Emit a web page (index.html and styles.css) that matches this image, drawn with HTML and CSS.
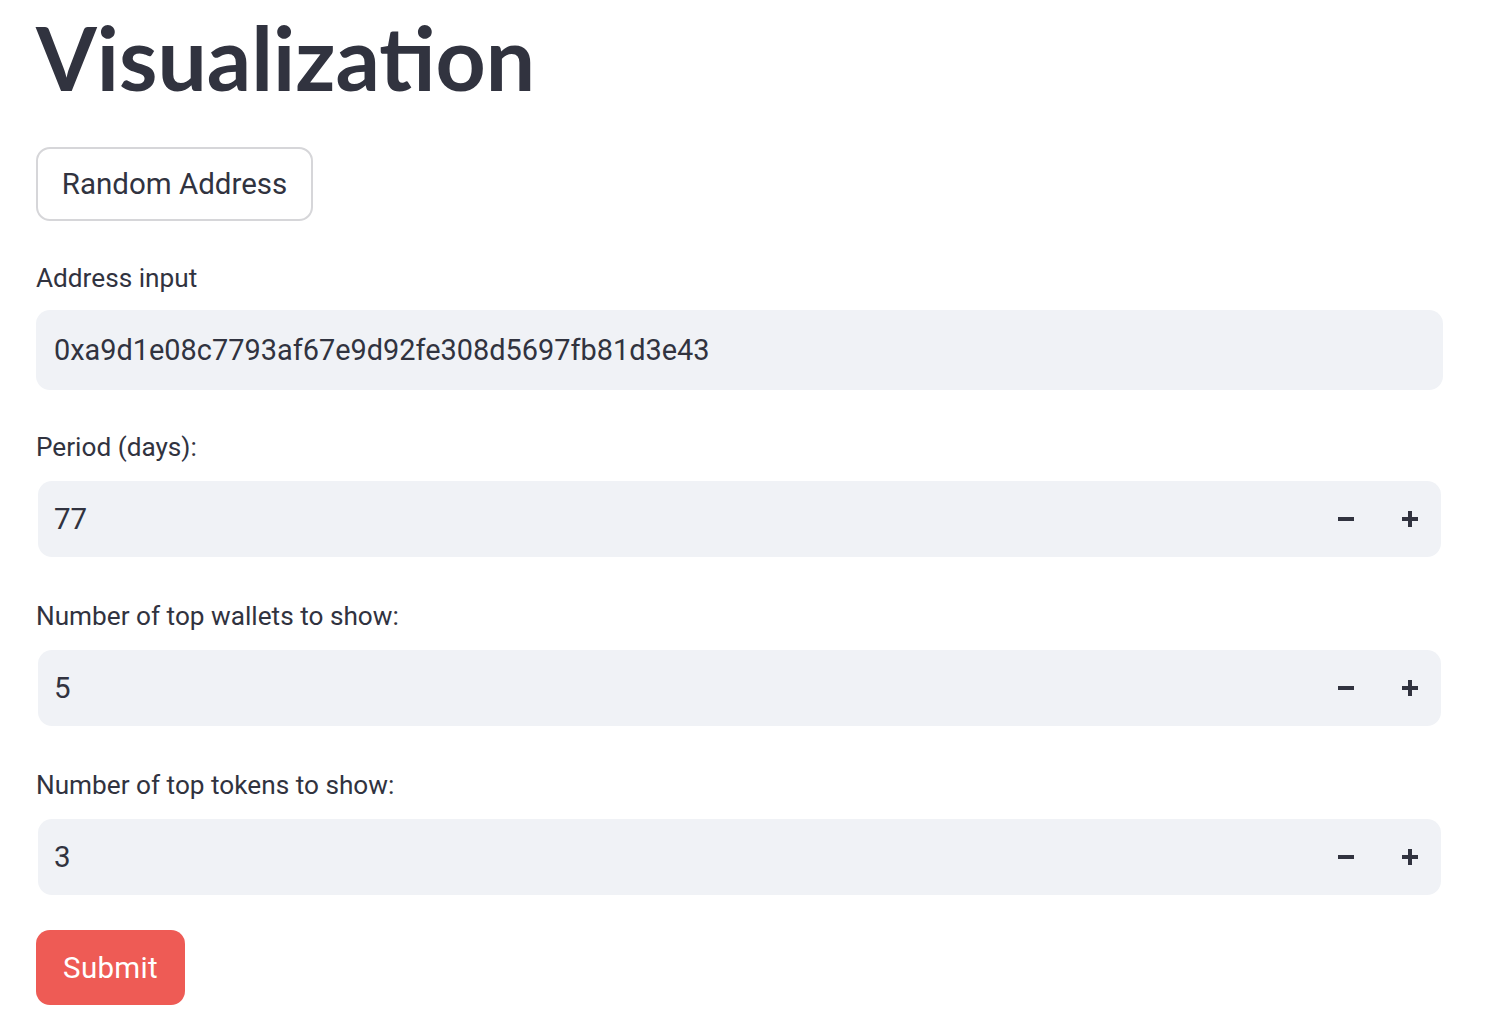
FILE: index.html
```html
<!DOCTYPE html>
<html>
<head>
<meta charset="utf-8">
<link rel="stylesheet" href="styles.css">
</head>
<body>
<main class="page">
  <h1 class="title">Visualization</h1>

  <button class="btn btn-secondary">Random Address</button>

  <div class="field">
    <label class="label">Address input</label>
    <div class="text-input">0xa9d1e08c7793af67e9d92fe308d5697fb81d3e43</div>
  </div>

  <div class="field">
    <label class="label">Period (days):</label>
    <div class="num-wrap">
      <div class="num-input">
        <span class="num-value">77</span>
        <span class="step step-minus">
          <svg width="16" height="16" viewBox="0 0 16 16"><rect x="0" y="6" width="16" height="4" fill="#31333F"/></svg>
        </span>
        <span class="step step-plus">
          <svg width="16" height="16" viewBox="0 0 16 16"><rect x="0" y="6" width="16" height="4" fill="#31333F"/><rect x="6" y="0" width="4" height="16" fill="#31333F"/></svg>
        </span>
      </div>
    </div>
  </div>

  <div class="field">
    <label class="label">Number of top wallets to show:</label>
    <div class="num-wrap">
      <div class="num-input">
        <span class="num-value">5</span>
        <span class="step step-minus">
          <svg width="16" height="16" viewBox="0 0 16 16"><rect x="0" y="6" width="16" height="4" fill="#31333F"/></svg>
        </span>
        <span class="step step-plus">
          <svg width="16" height="16" viewBox="0 0 16 16"><rect x="0" y="6" width="16" height="4" fill="#31333F"/><rect x="6" y="0" width="4" height="16" fill="#31333F"/></svg>
        </span>
      </div>
    </div>
  </div>

  <div class="field">
    <label class="label">Number of top tokens to show:</label>
    <div class="num-wrap">
      <div class="num-input">
        <span class="num-value">3</span>
        <span class="step step-minus">
          <svg width="16" height="16" viewBox="0 0 16 16"><rect x="0" y="6" width="16" height="4" fill="#31333F"/></svg>
        </span>
        <span class="step step-plus">
          <svg width="16" height="16" viewBox="0 0 16 16"><rect x="0" y="6" width="16" height="4" fill="#31333F"/><rect x="6" y="0" width="4" height="16" fill="#31333F"/></svg>
        </span>
      </div>
    </div>
  </div>

  <button class="btn btn-primary">Submit</button>
</main>
</body>
</html>
```
FILE: styles.css
```css
html, body {
  margin: 0;
  padding: 0;
  background: #ffffff;
}

body {
  font-family: Roboto, "Liberation Sans", sans-serif;
  color: #31333F;
}

.page {
  width: 1407px;
  margin-left: 36px;
  padding-top: 14px;
  display: flex;
  flex-direction: column;
  align-items: flex-start;
}

.title {
  margin: 0;
  font-family: Lato, "Open Sans", sans-serif;
  font-weight: 700;
  font-size: 87.5px;
  line-height: 88px;
  height: 88px;
  letter-spacing: 0;
  color: #31333F;
}

.btn {
  box-sizing: border-box;
  height: 74px;
  padding: 0;
  border-radius: 14px;
  font-family: Roboto, "Liberation Sans", sans-serif;
  font-size: 29.5px;
  white-space: nowrap;
  display: inline-flex;
  align-items: center;
  justify-content: center;
  cursor: pointer;
}

.btn-secondary {
  margin-top: 45px;
  width: 277px;
  background: #ffffff;
  border: 2px solid #d6d6d9;
  color: #31333F;
}

.btn-primary {
  margin-top: 33px;
  width: 149px;
  height: 75px;
  background: #EE5B55;
  border: none;
  color: #ffffff;
  letter-spacing: 0.3px;
}

.field {
  width: 100%;
  margin-top: 39px;
  display: flex;
  flex-direction: column;
}

.label {
  font-size: 26.2px;
  line-height: 36px;
  height: 36px;
  color: #31333F;
  margin-bottom: 14px;
}

.text-input {
  box-sizing: border-box;
  height: 80px;
  width: 100%;
  background: #F0F2F6;
  border-radius: 14px;
  padding: 0 18px;
  display: flex;
  align-items: center;
  font-size: 28.9px;
  color: #31333F;
  white-space: nowrap;
}

.num-wrap {
  box-sizing: border-box;
  height: 80px;
  padding: 2px;
}

.num-input {
  box-sizing: border-box;
  height: 76px;
  background: #F0F2F6;
  border-radius: 14px;
  display: flex;
  align-items: center;
  padding-left: 16px;
}

.num-value {
  flex: 1;
  font-size: 29.5px;
  color: #31333F;
}

.step {
  height: 76px;
  display: flex;
  align-items: center;
  justify-content: center;
}

.step-minus {
  width: 66px;
}

.step-plus {
  width: 62px;
}
```
